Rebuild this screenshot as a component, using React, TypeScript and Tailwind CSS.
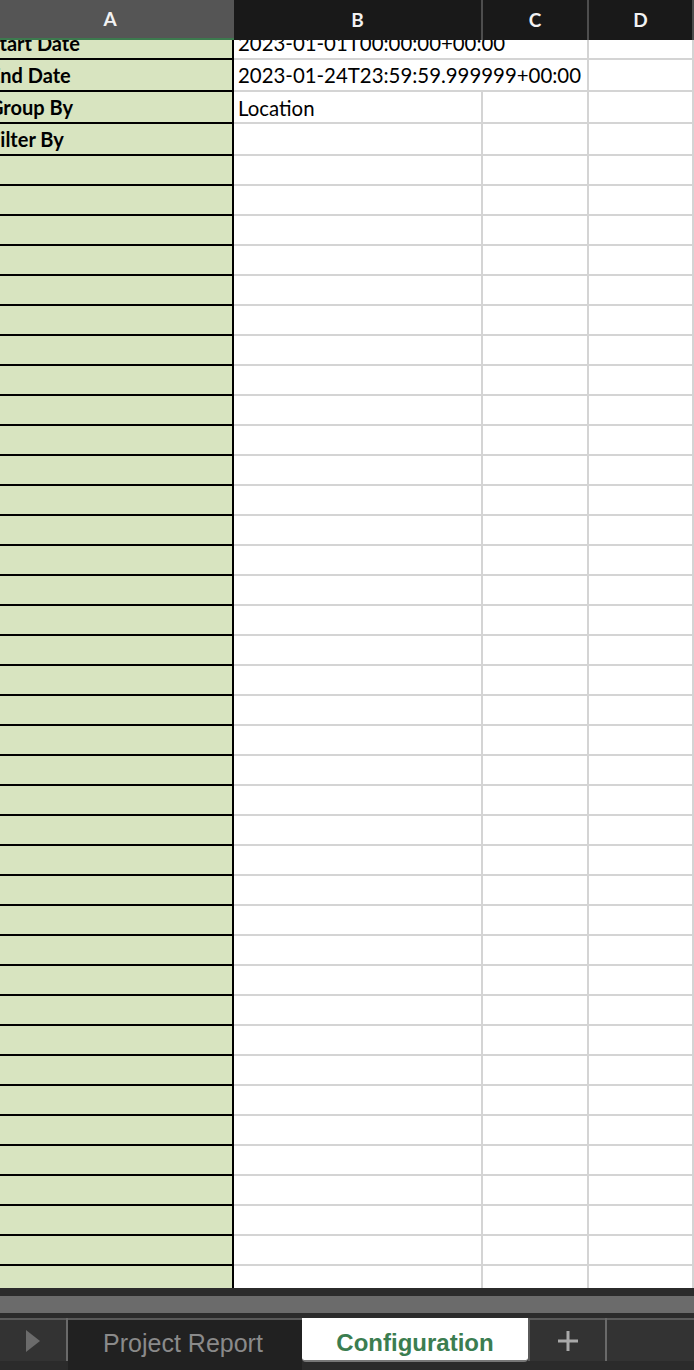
import React from "react";

const cellFont = { fontFamily: "Lato, 'Open Sans', sans-serif" };
const uiFont = { fontFamily: "'Liberation Sans', Arial, sans-serif" };

type Row = { a?: string; b?: string; merge?: boolean; h: string };

const rows: Row[] = [
  { a: "Start Date", b: "2023-01-01T00:00:00+00:00", merge: true, h: "h-[32px]" },
  { a: "End Date", b: "2023-01-24T23:59:59.999999+00:00", merge: true, h: "h-[32px]" },
  { a: "Group By", b: "Location", h: "h-[32px]" },
  { a: "Filter By", h: "h-[32px]" },
  ...Array.from({ length: 38 }, () => ({ h: "h-[30px]" } as Row)),
];

function SheetRow({ r }: { r: Row }) {
  return (
    <div className={`flex ${r.h} shrink-0`} style={cellFont}>
      <div className="w-[234px] shrink-0 bg-[#d8e4c0] border-r-2 border-b-2 border-black flex items-center overflow-hidden">
        {r.a && (
          <span className="ml-[-11px] text-[20px] font-bold text-black whitespace-nowrap leading-none">
            {r.a}
          </span>
        )}
      </div>
      {r.merge ? (
        <div className="w-[355px] shrink-0 border-r-2 border-b-2 border-[#d4d4d4] flex items-center pl-[4px] pt-[1px] whitespace-nowrap">
          <span className="text-[20.4px] text-black leading-none">{r.b}</span>
        </div>
      ) : (
        <>
          <div className="w-[249px] shrink-0 border-r-2 border-b-2 border-[#d4d4d4] flex items-center pl-[4px] pt-[2px] whitespace-nowrap">
            {r.b && <span className="text-[20.4px] text-black leading-none">{r.b}</span>}
          </div>
          <div className="w-[106px] shrink-0 border-r-2 border-b-2 border-[#d4d4d4]" />
        </>
      )}
      <div className="w-[105px] shrink-0 border-r-2 border-b-2 border-[#d4d4d4]" />
    </div>
  );
}

export default function App() {
  return (
    <div className="w-[694px] h-[1370px] bg-[#2b2b2b] flex flex-col overflow-hidden">
      {/* Column header */}
      <div className="flex h-[40px] shrink-0 bg-[#191919]" style={cellFont}>
        <div className="w-[234px] shrink-0 bg-[#555555] border-b-2 border-[#3c7a4e] flex items-center justify-center pr-[14px] text-[19px] font-bold text-[#f2f2f2]">
          A
        </div>
        <div className="w-[247px] shrink-0 flex items-center justify-center text-[19px] font-bold text-[#f2f2f2]">
          B
        </div>
        <div className="w-[2px] shrink-0 bg-[#4d4d4d]" />
        <div className="w-[104px] shrink-0 flex items-center justify-center text-[19px] font-bold text-[#f2f2f2]">
          C
        </div>
        <div className="w-[2px] shrink-0 bg-[#4d4d4d]" />
        <div className="w-[103px] shrink-0 flex items-center justify-center text-[19px] font-bold text-[#f2f2f2]">
          D
        </div>
        <div className="w-[2px] shrink-0 bg-[#4d4d4d]" />
      </div>

      {/* Grid */}
      <div className="h-[1248px] shrink-0 overflow-hidden bg-white">
        <div className="flex flex-col mt-[-12px]">
          {rows.map((r, i) => (
            <SheetRow key={i} r={r} />
          ))}
        </div>
      </div>

      {/* Scrollbar area */}
      <div className="h-[8px] shrink-0 bg-[#2b2b2b]" />
      <div className="h-[17px] shrink-0 bg-[#6b6b6b]" />
      <div className="h-[5px] shrink-0 bg-[#2b2b2b]" />

      {/* Tab bar */}
      <div className="h-[52px] shrink-0 flex bg-[#2b2b2b]" style={uiFont}>
        <div className="w-[66px] shrink-0 flex flex-col">
          <div className="h-[43px] border-t-2 border-[#5a5a5a] bg-[#333333] flex items-center justify-center">
            <svg width="16" height="22" viewBox="0 0 16 22">
              <path d="M1 0 L15 11 L1 22 Z" fill="#6b6b6b" />
            </svg>
          </div>
        </div>
        <div className="w-[2px] shrink-0 flex flex-col">
          <div className="h-[43px] bg-[#6a6a6a]" />
        </div>
        <div className="w-[234px] shrink-0 bg-[#212121] border-t-2 border-[#5a5a5a] flex items-start justify-center pt-[9px]">
          <span className="text-[25px] text-[#8a8a8a] leading-none mt-[2px] pr-[4px]">Project Report</span>
        </div>
        <div className="w-[226px] shrink-0 flex flex-col">
          <div className="h-[44px] bg-white rounded-b-[4px] border-b-2 border-[#777] flex items-center justify-center pt-[7px]">
            <span className="text-[24px] font-bold text-[#3b7d50] leading-none">Configuration</span>
          </div>
        </div>
        <div className="w-[77px] shrink-0 flex flex-col">
          <div className="h-[43px] border-t-2 border-l-2 border-[#5a5a5a] bg-[#333333] flex items-center justify-center">
            <svg width="20" height="20" viewBox="0 0 20 20">
              <rect x="0" y="8.5" width="20" height="3" fill="#a9a9a9" />
              <rect x="8.5" y="0" width="3" height="20" fill="#a9a9a9" />
            </svg>
          </div>
        </div>
        <div className="w-[2px] shrink-0 flex flex-col">
          <div className="h-[43px] bg-[#6a6a6a]" />
        </div>
        <div className="flex-1 flex flex-col">
          <div className="h-[43px] border-t-2 border-[#5a5a5a] bg-[#333333]" />
        </div>
      </div>
    </div>
  );
}
